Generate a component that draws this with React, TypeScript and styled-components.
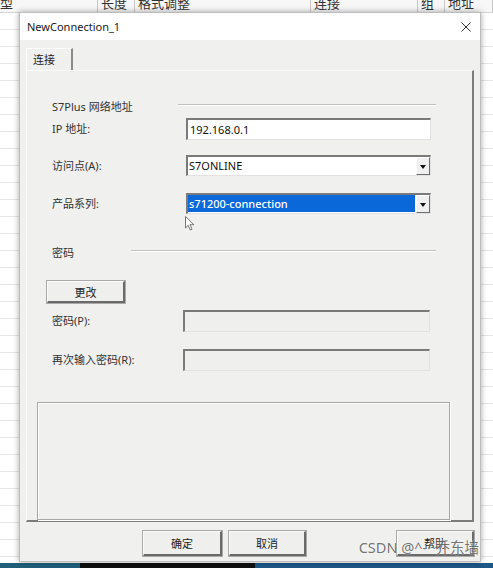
import styled, { createGlobalStyle } from "styled-components"

const GlobalStyle = createGlobalStyle`
  html, body { margin: 0; padding: 0; }
  body {
    width: 493px;
    height: 568px;
    overflow: hidden;
    font-family: "Noto Sans", "Noto Sans CJK SC", sans-serif;
    color: #222;
    background: #fff;
  }
`

const Screen = styled.div`
  position: relative;
  width: 493px;
  height: 568px;
  display: flex;
  flex-direction: column;
`

const Sheet = styled.div`
  flex: 1;
  background-color: #fff;
  background-image: repeating-linear-gradient(
    to bottom,
    transparent 0px,
    transparent 16px,
    #e6e6e6 16px,
    #e6e6e6 17px
  );
  background-position: 0 13px;
`

const SheetHeader = styled.div`
  display: grid;
  grid-template-columns: 98px 37px 176px 107px 27px 1fr;
  height: 12px;
  overflow: hidden;
  background: #f7f7f7;
  border-bottom: 1px solid #d8d8d8;
`

const HeaderCell = styled.div<{ $first?: boolean }>`
  font-family: "Noto Sans CJK SC", sans-serif;
  font-size: 13px;
  line-height: 12px;
  margin-top: -3px;
  padding-left: ${(p) => (p.$first ? 0 : 3)}px;
  color: #333;
  border-right: 1px solid #c8c8c8;
  white-space: nowrap;
`

const Taskbar = styled.div`
  height: 5px;
  display: grid;
  grid-template-columns: 80px 175px 1fr;
`

const TaskSeg = styled.div<{ $c: string }>`
  background: ${(p) => p.$c};
`

const Dialog = styled.div`
  position: absolute;
  left: 19px;
  top: 12px;
  width: 462px;
  height: 550px;
  background: #f0f0ee;
  box-shadow: 0 0 6px rgba(0, 0, 0, 0.35);
  border: 1px solid #bdbdbd;
  box-sizing: border-box;
  display: flex;
  flex-direction: column;
`

const TitleBar = styled.div`
  height: 27px;
  background: #fff;
  display: flex;
  align-items: center;
  justify-content: space-between;
  padding: 0 9px 0 7px;
  font-size: 11px;
  color: #1a1a1a;
`

const CloseX = styled.svg`
  width: 10px;
  height: 10px;
`

const Body = styled.div`
  flex: 1;
  padding: 8px 6px 0 6px;
  display: flex;
  flex-direction: column;
`

const TabStrip = styled.div`
  display: flex;
  height: 22px;
`

const Tab = styled.div`
  width: 38px;
  padding-left: 6px;
  font-size: 11px;
  line-height: 22px;
  border-right: 2px solid #8a8a8a;
  border-top: 1px solid #fff;
  border-left: 1px solid #fff;
  color: #222;
`

const Panel = styled.div`
  width: 448px;
  height: 452px;
  box-sizing: border-box;
  border-left: 1px solid #fbfbfb;
  border-top: 1px solid #fbfbfb;
  border-right: 2px solid #7c7c7c;
  border-bottom: 2px solid #7c7c7c;
  padding: 0 0 0 25px;
  display: flex;
  flex-direction: column;
`

const GroupHead = styled.div<{ $top: number; $lineLeft: number }>`
  margin-top: ${(p) => p.$top}px;
  display: flex;
  align-items: center;
  height: 14px;
  font-size: 11px;
  color: #333;
  span {
    width: ${(p) => p.$lineLeft}px;
    flex-shrink: 0;
  }
  &::after {
    content: "";
    flex: 1;
    height: 1px;
    margin-top: -3px;
    background: #c0c0c0;
    border-bottom: 1px solid #fff;
    margin-right: 36px;
  }
`

const Row = styled.div<{ $top: number; $field: number }>`
  margin-top: ${(p) => p.$top}px;
  display: grid;
  grid-template-columns: ${(p) => p.$field}px 1fr;
  align-items: center;
`

const Label = styled.label`
  font-size: 11px;
  line-height: 14px;
  color: #333;
`

const TextBox = styled.div<{ $w: number; $disabled?: boolean }>`
  width: ${(p) => p.$w}px;
  height: 22px;
  box-sizing: border-box;
  background: ${(p) => (p.$disabled ? "#efefed" : "#fff")};
  border-top: 2px solid #7a7a7a;
  border-left: 2px solid #7a7a7a;
  border-right: 1px solid #e2e2e2;
  border-bottom: 1px solid #e2e2e2;
  font-size: 11px;
  line-height: 19px;
  padding-left: 2px;
  color: #111;
`

const Select = styled.div`
  width: 245px;
  height: 21px;
  box-sizing: border-box;
  background: #fff;
  border-top: 2px solid #7a7a7a;
  border-left: 2px solid #7a7a7a;
  border-right: 1px solid #e2e2e2;
  border-bottom: 1px solid #e2e2e2;
  display: flex;
`

const SelectValue = styled.div<{ $active?: boolean }>`
  flex: 1;
  font-size: 11px;
  line-height: 17px;
  padding-left: 1px;
  margin: 0 1px 1px 0;
  color: ${(p) => (p.$active ? "#fff" : "#111")};
  background: ${(p) => (p.$active ? "#0a68d8" : "transparent")};
  font-weight: ${(p) => (p.$active ? 500 : 400)};
`

const DropBtn = styled.div`
  width: 14px;
  box-sizing: border-box;
  background: #f0f0f0;
  border-top: 1px solid #fff;
  border-left: 1px solid #fff;
  border-right: 1px solid #6e6e6e;
  border-bottom: 1px solid #6e6e6e;
  display: flex;
  align-items: center;
  justify-content: center;
  &::after {
    content: "";
    border-left: 3px solid transparent;
    border-right: 3px solid transparent;
    border-top: 4px solid #111;
    margin-top: 2px;
  }
`

const Button = styled.button<{ $w?: number; $h?: number }>`
  width: ${(p) => p.$w ?? 78}px;
  height: ${(p) => p.$h ?? 25}px;
  box-sizing: border-box;
  background: #efefed;
  border-top: 1px solid #fbfbfb;
  border-left: 1px solid #fbfbfb;
  border-right: 2px solid #6a6a6a;
  border-bottom: 2px solid #6a6a6a;
  outline: 1px solid #a9a9a9;
  font-family: "Noto Sans CJK SC", sans-serif;
  font-size: 11px;
  color: #222;
  padding: 0;
`

const ChangeRow = styled.div`
  margin-top: 22px;
  margin-left: -5px;
  display: flex;
`

const EmptyBox = styled.div`
  margin: 31px 0 0 -15px;
  width: 413px;
  height: 118px;
  box-sizing: border-box;
  border: 1px solid #a8a8a8;
  box-shadow: 1px 1px 0 #fff, inset 1px 1px 0 #fff;
`

const Footer = styled.div`
  display: flex;
  padding: 9px 0 0 117px;
  gap: 7px;
  & > :last-child {
    margin-left: 84px;
  }
`

const Watermark = styled.div`
  position: absolute;
  right: 14px;
  bottom: 11px;
  font-family: "Noto Sans", "Noto Sans CJK SC", sans-serif;
  font-size: 14.5px;
  color: rgba(80, 80, 80, 0.8);
  text-shadow: 0 0 2px rgba(255, 255, 255, 0.9);
  pointer-events: none;
`

const Pointer = styled.svg`
  position: absolute;
  left: 185px;
  top: 216px;
  width: 10px;
  height: 15px;
`

const headers = ["型", "长度", "格式调整", "连接", "组", "地址"]

export default function App() {
  return (
    <>
      <GlobalStyle />
      <Screen>
        <Sheet>
          <SheetHeader>
            {headers.map((h, i) => (
              <HeaderCell key={i} $first={i === 0}>
                {h}
              </HeaderCell>
            ))}
          </SheetHeader>
        </Sheet>
        <Taskbar>
          <TaskSeg $c="#1f5f7a" />
          <TaskSeg $c="#101010" />
          <TaskSeg $c="#1d5788" />
        </Taskbar>

        <Dialog>
          <TitleBar>
            <span>NewConnection_1</span>
            <CloseX viewBox="0 0 10 10">
              <path d="M0.5 0.5 L9.5 9.5 M9.5 0.5 L0.5 9.5" stroke="#333" strokeWidth="1" />
            </CloseX>
          </TitleBar>
          <Body>
            <TabStrip>
              <Tab>连接</Tab>
            </TabStrip>
            <Panel>
              <GroupHead $top={28} $lineLeft={126}>
                <span>S7Plus 网络地址</span>
              </GroupHead>
              <Row $top={5} $field={134}>
                <Label>IP 地址:</Label>
                <TextBox $w={245}>192.168.0.1</TextBox>
              </Row>
              <Row $top={15} $field={134}>
                <Label>访问点(A):</Label>
                <Select>
                  <SelectValue>S7ONLINE</SelectValue>
                  <DropBtn />
                </Select>
              </Row>
              <Row $top={17} $field={134}>
                <Label>产品系列:</Label>
                <Select>
                  <SelectValue $active>s71200-connection</SelectValue>
                  <DropBtn />
                </Select>
              </Row>
              <GroupHead $top={31} $lineLeft={79}>
                <span>密码</span>
              </GroupHead>
              <ChangeRow>
                <Button $h={22}>更改</Button>
              </ChangeRow>
              <Row $top={7} $field={131}>
                <Label>密码(P):</Label>
                <TextBox $w={247} $disabled />
              </Row>
              <Row $top={17} $field={131}>
                <Label>再次输入密码(R):</Label>
                <TextBox $w={247} $disabled />
              </Row>
              <EmptyBox />
            </Panel>
            <Footer>
              <Button $w={79}>确定</Button>
              <Button $w={77}>取消</Button>
              <Button $w={77}>帮助</Button>
            </Footer>
          </Body>
        </Dialog>

        <Pointer viewBox="0 0 10 15">
          <path d="M0.5 0.5 L0.5 12 L3.2 9.4 L5.2 14 L7 13.2 L5 8.7 L8.8 8.7 Z" fill="#fff" stroke="#555" strokeWidth="0.8" />
        </Pointer>
        <Watermark>CSDN @^-^乔东墙</Watermark>
      </Screen>
    </>
  )
}
